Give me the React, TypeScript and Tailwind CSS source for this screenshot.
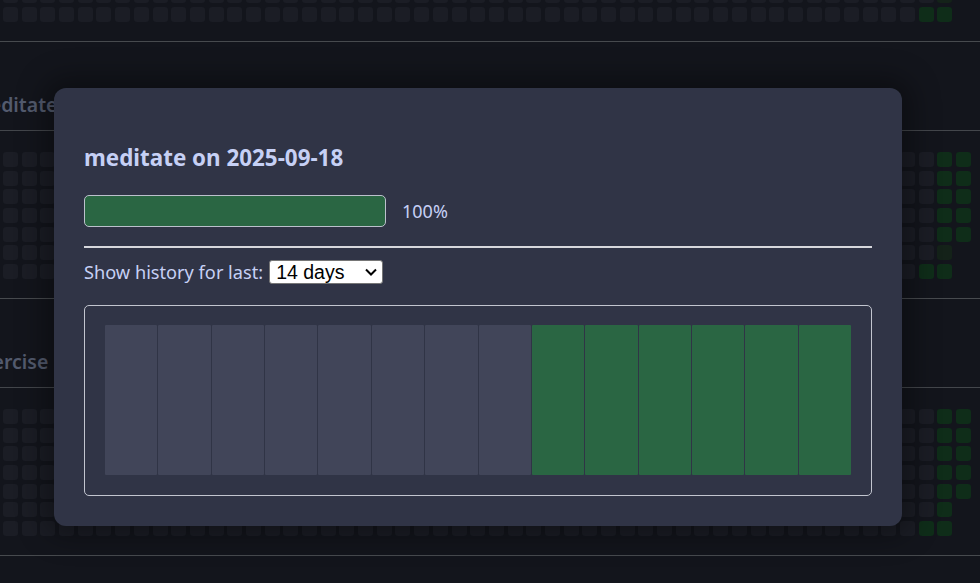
import React from 'react';

type CellState = 'none' | 'done' | 'faint';

const WEEKS = 52;
const LAST_WEEK_DAYS = 5;

const GREEN_CELLS: Record<string, Record<string, CellState>> = {
  read: { '49-6': 'done', '50-6': 'done', '50-5': 'faint' },
  meditate: {
    '51-0': 'done', '51-1': 'done', '51-2': 'done', '51-3': 'done', '51-4': 'done',
    '50-0': 'done', '50-1': 'done', '50-2': 'done', '50-3': 'done', '50-4': 'done',
    '50-5': 'faint', '50-6': 'done', '49-6': 'done',
  },
  exercise: {
    '51-0': 'done', '51-1': 'done', '51-2': 'done', '51-3': 'done', '51-4': 'done',
    '50-0': 'done', '50-1': 'done', '50-2': 'done', '50-3': 'done', '50-4': 'done',
    '50-5': 'done', '50-6': 'done', '49-6': 'done',
  },
  journal: {},
};

const cellClass: Record<CellState, string> = {
  none: 'bg-[#1b1d25]',
  done: 'bg-[#0f2d19]',
  faint: 'bg-[#142219]',
};

function YearGrid({ habit }: { habit: string }) {
  const marks = GREEN_CELLS[habit] ?? {};
  const cells: React.ReactNode[] = [];
  for (let w = 0; w < WEEKS; w++) {
    const days = w === WEEKS - 1 ? LAST_WEEK_DAYS : 7;
    for (let d = 0; d < days; d++) {
      const state = marks[`${w}-${d}`] ?? 'none';
      cells.push(<div key={`${w}-${d}`} className={`rounded-[3px] ${cellClass[state]}`} />);
    }
  }
  return (
    <div className="grid grid-flow-col grid-rows-[repeat(7,15px)] auto-cols-[15px] gap-[3.7px]">
      {cells}
    </div>
  );
}

function HabitSection({ habit }: { habit: string }) {
  return (
    <section className="border-t border-[#474a4e]">
      <div className="h-[89px] border-b border-[#43464b] pt-[48px]">
        <h3 className="-ml-[29px] text-[19.5px] leading-[30px] font-semibold text-[#535b6e]">{habit}</h3>
      </div>
      <div className="h-[167px] pt-[21px] pl-[3px]">
        <YearGrid habit={habit} />
      </div>
    </section>
  );
}

const HISTORY = [false, false, false, false, false, false, false, false, true, true, true, true, true, true];

function DayModal() {
  return (
    <div className="absolute left-[54px] top-[88px] w-[848px] rounded-xl bg-[#303446] px-[30px] pt-[55px] pb-[30px] shadow-[0_0_28px_10px_rgba(0,0,0,0.35)]">
      <h2 className="text-[22.4px] leading-[30px] font-bold text-[#c6d0f5]">meditate on 2025-09-18</h2>

      <div className="mt-[22px] flex items-center">
        <div className="h-[32px] w-[302px] rounded-[5px] border border-[#bcc0cc] bg-[#2a6643]" />
        <span className="ml-[16px] text-[18px] leading-[24px] text-[#c6d0f5]">100%</span>
      </div>

      <div className="mt-[19px] h-[2px] bg-[#d6d7dc]" />

      <div className="mt-[12px] flex h-[24px] items-center">
        <label className="text-[18.2px] leading-[24px] text-[#c6d0f5]">Show history for last:</label>
        <div className="relative ml-[6px] flex h-[24px]">
          <select
            defaultValue="14"
            className="block h-[24px] w-[114px] appearance-none rounded-[3px] border border-[#767676] bg-white pl-[6px] font-['Liberation_Sans',Arial,sans-serif] text-[19.5px] leading-[22px] text-black"
          >
            <option value="7">7 days</option>
            <option value="14">14 days</option>
            <option value="30">30 days</option>
          </select>
          <svg
            className="pointer-events-none absolute right-[6px] top-[8px]"
            width="12"
            height="8"
            viewBox="0 0 12 8"
            fill="none"
          >
            <path d="M1 1.5l5 5 5-5" stroke="#000" strokeWidth="2" />
          </svg>
        </div>
      </div>

      <div className="mt-[21px] rounded-[5px] border border-[#c2c5cf] px-[20px] pt-[19px] pb-[20px]">
        <div className="flex h-[150px] gap-px">
          {HISTORY.map((done, i) => (
            <div key={i} className={`flex-1 rounded-[1px] ${done ? 'bg-[#2a6643]' : 'bg-[#414559]'}`} />
          ))}
        </div>
      </div>
    </div>
  );
}

export default function App() {
  return (
    <div className="relative h-[583px] w-full overflow-hidden bg-[#13151c] font-['Noto_Sans',sans-serif]">
      <div className="-mt-[216px]">
        {['read', 'meditate', 'exercise', 'journal'].map((h) => (
          <HabitSection key={h} habit={h} />
        ))}
      </div>
      <DayModal />
    </div>
  );
}
